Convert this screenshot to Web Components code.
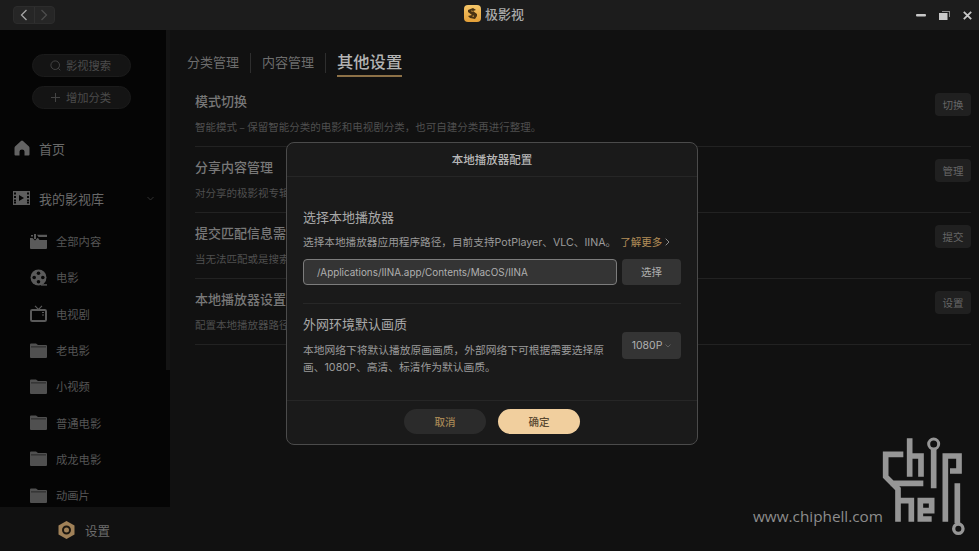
<!DOCTYPE html>
<html lang="zh"><head><meta charset="utf-8"><style>
html,body{margin:0;padding:0;width:979px;height:551px;overflow:hidden;background:#111}
body{font-family:"Noto Sans CJK SC","Inter",sans-serif}
</style></head><body>
<app-shell></app-shell>
<script>
const F='"Inter","Noto Sans CJK SC",sans-serif';
function def(name,html){customElements.define(name,class extends HTMLElement{connectedCallback(){if(this.shadowRoot)return;const s=this.attachShadow({mode:'open'});s.innerHTML=typeof html==='function'?html(this):html;}});}
const folder=`<svg width="17" height="15" viewBox="0 0 17 15"><path fill="#505050" d="M0 1.500Q0 .5 1 .5H6L8 2h8q1 0 1 1V14q0 1-1 1H1q-1 0-1-1Z"/><path fill="#1d1d1d" d="M1 3.500h15v.8H1z"/></svg>`;
const icons={
 all:`<svg width="17" height="15" viewBox="0 0 17 15"><path fill="#5a5a5a" d="M0 4h2.500L5 6.500 7.500 4H8l1.500 2H17v8q0 1-1 1H1q-1 0-1-1Z"/><path fill="#5a5a5a" d="M7 .8h10v2.200H8.500zM4 0h2v5H4zM1 1h2v1.500H1z"/></svg>`,
 movie:`<svg width="17" height="17" viewBox="0 0 17 17"><circle cx="8.500" cy="8.500" r="8" fill="#5a5a5a"/><g fill="#070707"><circle cx="8.500" cy="4.200" r="1.800"/><circle cx="8.500" cy="12.800" r="1.800"/><circle cx="4.200" cy="8.500" r="1.800"/><circle cx="12.800" cy="8.500" r="1.800"/></g><path d="M11 15.200h6v1.400h-6z" fill="#5a5a5a"/></svg>`,
 tv:`<svg width="17" height="17" viewBox="0 0 17 17"><path d="M5 .8l3.500 3.700L12 .8" fill="none" stroke="#5a5a5a" stroke-width="1.100"/><rect x="1" y="5" width="15" height="11" rx="1.200" fill="none" stroke="#5a5a5a" stroke-width="2"/><path d="M12 7h2v1h-2zM12 9.500h2v1h-2z" fill="#5a5a5a"/></svg>`,
 folder};
def('win-bar',`<style>
:host{display:flex;height:30px;background:#1c1c1c;align-items:center;position:relative;flex:none;font-family:"Noto Sans CJK SC",sans-serif}
.nav{margin-left:13px;width:42px;height:18px;border:1px solid #2c2c2c;background:#262626;border-radius:4px;display:flex;box-sizing:border-box}
.nav span{flex:1;display:flex;align-items:center;justify-content:center}
.nav span+span{border-left:1px solid #303030}
.title{position:absolute;left:464px;top:3px;display:flex;align-items:center;gap:4px;color:#aaa;font-size:13px;font-weight:500;height:20px}
.logo{width:17px;height:17px;border-radius:4px;background:linear-gradient(#f6c668,#e39f38);display:flex;align-items:center;justify-content:center}
.ctl{margin-left:auto;margin-right:7px;display:flex;gap:13px;align-items:center}
</style>
<div class="nav"><span><svg width="8" height="12" viewBox="0 0 8 12"><path d="M6.500 1L1.500 6l5 5" fill="none" stroke="#a5a5a5" stroke-width="1.300"/></svg></span><span><svg width="8" height="12" viewBox="0 0 8 12"><path d="M1.500 1l5 5-5 5" fill="none" stroke="#4c4c4c" stroke-width="1.300"/></svg></span></div>
<div class="title"><span class="logo"><svg width="13" height="13" viewBox="0 0 13 13"><path d="M2 3l5-2 3 2-3 1 4 3v2l-2 3-5-1-2-2 4-1-4-3z" fill="#4a3313"/><path d="M5 3.500l2 .5-1 1zM6 9l2-.5-.5 1.500z" fill="#eeb252"/></svg></span><span>极影视</span></div>
<div class="ctl"><svg width="10" height="3" viewBox="0 0 10 3"><rect width="10" height="2.500" rx="1" fill="#c8c8c8"/></svg><svg width="11" height="9" viewBox="0 0 11 9"><path d="M3 0h8v6h-1V1H3z" fill="#888"/><path d="M0 2h8.500V9H0z" fill="#c8c8c8"/></svg><svg width="9" height="9" viewBox="0 0 9 9"><path d="M.8.8l7.400 7.400M8.200.8L.8 8.200" stroke="#c8c8c8" stroke-width="1.800"/></svg></div>`);
def('side-pill',`<style>
:host{display:flex;box-sizing:border-box;width:99px;height:23px;border-radius:12px;background:#141414;border:1px solid #1b1b1b;align-items:center;justify-content:center;gap:5px;color:#4b4b4b;font-size:11.300px;line-height:1;padding-right:2px}
</style><slot name="icon"></slot><slot></slot>`);
def('nav-main',`<style>
:host{display:flex;align-items:center;height:20px;padding-left:13px;color:#696969;font-size:13px;position:relative}
.i{width:17px;display:flex;margin-right:9px;justify-content:center}
</style><span class="i"><slot name="icon"></slot></span><slot></slot><slot name="after"></slot>`);
def('nav-sub',el=>`<style>
:host{display:flex;align-items:center;height:36.300px;padding-left:30px;color:#555;font-size:11.300px}
.i{width:17px;display:flex;margin-right:9px;align-items:center;justify-content:center}
</style><span class="i">${icons[el.getAttribute('icon')]}</span><slot></slot>`);
def('side-bar',`<style>
:host{display:block;width:170px;flex:none;background:#050505;position:relative;overflow:hidden;height:477px;font-family:"Noto Sans CJK SC",sans-serif}
.pills{display:flex;flex-direction:column;align-items:center;gap:9px;padding:24px 0 0 0;margin-left:-7px}
.main{margin-top:29px}
.lib{margin-top:30px}
.subs{margin-top:15px}
.thumb{position:absolute;left:166px;top:0;width:4px;height:340px;background:#141414}
</style>
<div class="pills"><side-pill><svg slot="icon" width="11" height="11" viewBox="0 0 11 11"><circle cx="5.200" cy="5.200" r="4.300" fill="none" stroke="#444" stroke-width="1"/><path d="M8.300 8.300l2 2" stroke="#444"/></svg>影视搜索</side-pill><side-pill><svg slot="icon" width="11" height="11" viewBox="0 0 11 11"><path d="M5.500 1v9M1 5.500h9" stroke="#444" stroke-width="1"/></svg>增加分类</side-pill></div>
<div class="main"><nav-main><svg slot="icon" width="16" height="16" viewBox="0 0 16 16"><path fill="#636363" d="M8 .5Q8.500.5 9 1L15 6.500Q15.500 7 15.500 8V14.500Q15.500 15.500 14.500 15.500H10.500V11.500Q10.500 9.500 8 9.500 5.500 9.500 5.500 11.500V15.500H1.500Q.5 15.500.5 14.500V8Q.5 7 1 6.500L7 1Q7.500.5 8 .5Z"/></svg>首页</nav-main></div>
<div class="lib"><nav-main><svg slot="icon" width="17" height="14" viewBox="0 0 17 14"><path fill="#5e5e5e" fill-rule="evenodd" d="M0 0h17v14H0zM1 1.500v2h2v-2zm0 3.500v2h2V5zm0 3.500v2h2v-2zm0 2.500v1.500h2V11zM14 1.500v2h2v-2zm0 3.500v2h2V5zm0 3.500v2h2v-2zm0 2.500v1.500h2V11zM6 4v6l5-3z"/></svg>我的影视库<svg slot="after" style="position:absolute;left:147px;top:8px" width="7" height="5" viewBox="0 0 7 5"><path d="M.5 1l3 3 3-3" fill="none" stroke="#333"/></svg></nav-main></div>
<div class="subs"><nav-sub icon="all">全部内容</nav-sub><nav-sub icon="movie">电影</nav-sub><nav-sub icon="tv">电视剧</nav-sub><nav-sub icon="folder">老电影</nav-sub><nav-sub icon="folder">小视频</nav-sub><nav-sub icon="folder">普通电影</nav-sub><nav-sub icon="folder">成龙电影</nav-sub><nav-sub icon="folder">动画片</nav-sub></div>
<div class="thumb"></div>`);
def('setting-row',el=>`<style>
:host{display:flex;justify-content:space-between;box-sizing:border-box;height:66px;border-bottom:1px solid #222;padding-top:12px;color:#666}
.t{font-size:13px;color:#787878;font-weight:500;line-height:19px;margin-top:-2px}
.d{font-size:10.500px;color:#4f4f4f;line-height:16px;margin-top:9px;white-space:nowrap}
button{all:unset;box-sizing:border-box;width:36px;height:23px;border-radius:4px;background:#202020;color:#666;font-size:10.500px;text-align:center;line-height:23px}
</style><div><div class="t">${el.getAttribute('t')}</div><div class="d">${el.getAttribute('d')}</div></div><button>${el.getAttribute('b')}</button>`);
def('tab-bar',`<style>
:host{display:flex;align-items:flex-start;height:29px;font-size:13px;color:#6d6d6d}
span{line-height:20px;padding:0 11px;height:20px;margin-top:1px;position:relative;top:-1px}
.sep{width:1px;height:20px;background:#2e2e2e;margin-top:1px;flex:none}
.first{padding-left:0}
.cur{box-sizing:border-box;border-bottom:2px solid #8d7147;height:25px;line-height:19px;margin-left:11px;font-size:16.300px;font-weight:500;color:#b3b3b3;white-space:nowrap}
</style><span class="first">分类管理</span><i class="sep"></i><span>内容管理</span><i class="sep"></i><div class="cur">其他设置</div>`);
def('main-panel',`<style>
:host{display:block;flex:1;background:#111;box-sizing:border-box;padding:22px 8px 0 17px;height:521px;font-family:"Noto Sans CJK SC",sans-serif}
.rows{margin-left:8px}
</style><tab-bar></tab-bar><div class="rows"><slot></slot></div>`);
def('player-dialog',`<style>
:host{position:absolute;left:286px;top:142px;width:412px;height:303px;box-sizing:border-box;background:#1a1a1a;border:1px solid #4b4b4b;border-radius:8px;display:flex;flex-direction:column;font-family:"Noto Sans CJK SC",sans-serif;color:#aaa}
.h{flex:none;border-bottom:1px solid #262626;display:flex;align-items:center;justify-content:center;font-size:11.500px;font-weight:500;color:#b8b8b8;padding-bottom:2px;height:31px}
.b{flex:1;padding:0 16px 0 16px;border-bottom:1px solid #262626}
.t{font-size:13px;color:#a8a8a8;line-height:18px}
.d{font-size:10.750px;line-height:17px;color:#9b9b9b;font-family:${F}}
.s1 .t{margin-top:31px}.s1 .d{margin-top:8px;white-space:nowrap;font-size:10.650px}
.more{color:#b28d58;margin-left:4px;font-size:10.500px}
.row{display:flex;gap:5px;margin-top:8px}
.inp{width:314px;height:26px;box-sizing:border-box;border:1px solid #7c7c7c;border-radius:4px;background:#343434;color:#b0b0b0;font:9.900px ${F};line-height:24px;padding-left:13px}
.btn{all:unset;width:59px;height:26px;border-radius:4px;background:#343434;color:#b0b0b0;font-size:10.500px;text-align:center;line-height:26px}
hr{border:0;border-top:1px solid #272727;margin:18px 0 0}
.s2{display:flex;justify-content:space-between;margin-top:11px}
.s2 .d{width:305px;margin-top:9px}
.sel{width:59px;height:27px;border-radius:4px;background:#343434;color:#b0b0b0;font:10.500px ${F};display:flex;align-items:center;justify-content:center;gap:3px;margin-top:17px}
.f{height:43px;flex:none;display:flex;gap:12px;justify-content:center;align-items:center;padding-bottom:2px;box-sizing:border-box}
.p{all:unset;width:82px;height:25px;border-radius:13px;text-align:center;line-height:25px;font-size:10.500px;font-weight:500}
.c{background:#2b2b2b;color:#a68654}.o{background:#f1cf9e;color:#5a4a32}
</style>
<div class="h">本地播放器配置</div>
<div class="b"><div class="s1"><div class="t">选择本地播放器</div><div class="d">选择本地播放器应用程序路径，目前支持PotPlayer、VLC、IINA。<span class="more">了解更多 <svg width="5" height="8" viewBox="0 0 5 8"><path d="M.7.7L4 4 .7 7.300" fill="none" stroke="#9a9a9a" stroke-width=".9"/></svg></span></div>
<div class="row"><div class="inp">/Applications/IINA.app/Contents/MacOS/IINA</div><button class="btn">选择</button></div></div><hr>
<div class="s2"><div><div class="t">外网环境默认画质</div><div class="d">本地网络下将默认播放原画画质，外部网络下可根据需要选择原画、1080P、高清、标清作为默认画质。</div></div><div class="sel">1080P <svg width="6" height="4" viewBox="0 0 6 4"><path d="M.5.5L3 3 5.500.5" fill="none" stroke="#5f5f5f"/></svg></div></div></div>
<div class="f"><button class="p c">取消</button><button class="p o">确定</button></div>`);
def('chip-mark',`<style>
:host{position:absolute;left:740px;top:420px;width:239px;height:131px}
.u{position:absolute;left:13px;top:87px;font:15.300px "Open Sans",sans-serif;color:#8d8d8d;line-height:18px;white-space:nowrap}
svg{position:absolute;left:0;top:0}
</style><div class="u">www.chiphell.com</div>
<svg width="239" height="131" viewBox="0 0 717 393" fill="none" stroke="#969696" stroke-width="17"><path d="M490 103H437V170L474 207V305M452 190H550M509 55V170M509 108H543V170M581 88V205M616 305V108H657V153H630M472 242H514V305M575 297H541V242H575V272H541M652 190V310"/><circle cx="581" cy="72" r="15" stroke-width="9"/><circle cx="655" cy="326" r="14" stroke-width="10"/></svg>`);
def('app-shell',`<style>
:host{display:block;width:979px;height:551px;position:relative;background:#111;overflow:hidden}
.w{display:flex}
.foot{position:absolute;left:0;top:507px;width:170px;height:44px;background:#111;display:flex;align-items:center;padding:2px 0 0 58px;box-sizing:border-box;gap:10px;color:#6d6d6d;font-size:12.500px;font-family:"Noto Sans CJK SC",sans-serif}
</style>
<win-bar></win-bar>
<div class="w"><side-bar></side-bar><main-panel>
<setting-row t="模式切换" d="智能模式 – 保留智能分类的电影和电视剧分类，也可自建分类再进行整理。" b="切换"></setting-row>
<setting-row t="分享内容管理" d="对分享的极影视专辑进行管理" b="管理"></setting-row>
<setting-row t="提交匹配信息需求" d="当无法匹配或是搜索不到影片时提交" b="提交"></setting-row>
<setting-row t="本地播放器设置" d="配置本地播放器路径" b="设置"></setting-row>
</main-panel></div>
<div class="foot"><svg width="17" height="18" viewBox="0 0 17 18"><path fill="#a08158" d="M8.500 0L16.500 4.500V13.500L8.500 18 .5 13.500V4.500z"/><circle cx="8.500" cy="9" r="3.500" fill="none" stroke="#1c1710" stroke-width="2"/></svg>设置</div>
<player-dialog></player-dialog><chip-mark></chip-mark>`);
</script></body></html>
